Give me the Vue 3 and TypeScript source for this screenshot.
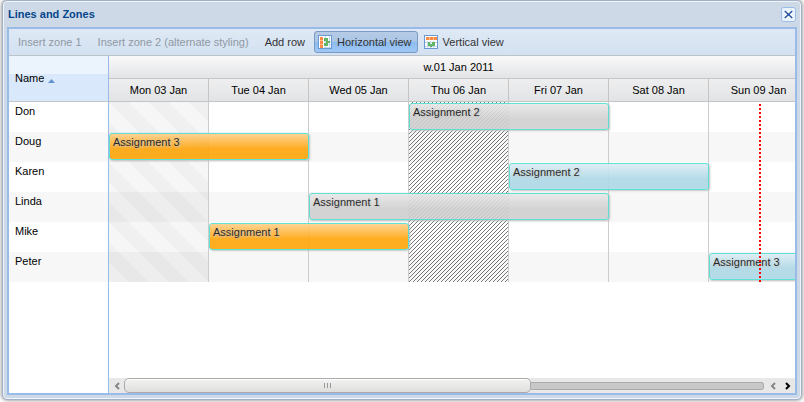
<script setup lang="ts">
import { ref } from 'vue'

interface Assignment {
  row: number
  start: number
  days: number
  name: string
  kind: 'orange' | 'grey' | 'blue'
}

const dayWidth = 100
const rowHeight = 30

const days: string[] = [
  'Mon 03 Jan',
  'Tue 04 Jan',
  'Wed 05 Jan',
  'Thu 06 Jan',
  'Fri 07 Jan',
  'Sat 08 Jan',
  'Sun 09 Jan',
]

const people: string[] = ['Don', 'Doug', 'Karen', 'Linda', 'Mike', 'Peter']

const assignments: Assignment[] = [
  { row: 0, start: 3, days: 2, name: 'Assignment 2', kind: 'grey' },
  { row: 1, start: 0, days: 2, name: 'Assignment 3', kind: 'orange' },
  { row: 2, start: 4, days: 2, name: 'Assignment 2', kind: 'blue' },
  { row: 3, start: 2, days: 3, name: 'Assignment 1', kind: 'grey' },
  { row: 4, start: 1, days: 2, name: 'Assignment 1', kind: 'orange' },
  { row: 5, start: 6, days: 2, name: 'Assignment 3', kind: 'blue' },
]

const orientation = ref<'horizontal' | 'vertical'>('horizontal')

const place = (a: Assignment) => ({
  left: `${a.start * dayWidth}px`,
  top: `${a.row * rowHeight + 1}px`,
  width: `${a.days * dayWidth}px`,
})
</script>

<template>
  <main class="window">
    <header class="title-bar">
      <h1>Lines and Zones</h1>
      <button class="close" type="button" aria-label="Close">
        <svg width="15" height="15" viewBox="0 0 15 15">
          <rect x="0.5" y="0.5" width="14" height="14" rx="2" fill="#e9f3fd" stroke="#99bbe8" />
          <path d="M4 4l7 7M11 4l-7 7" stroke="#fff" stroke-width="3.5" />
          <path d="M3.8 4l7.4 7M11.2 4l-7.4 7" stroke="#24509f" stroke-width="1.6" />
        </svg>
      </button>
    </header>

    <div class="body">
      <div class="toolbar" role="toolbar">
        <button type="button" disabled>Insert zone 1</button>
        <button type="button" disabled>Insert zone 2 (alternate styling)</button>
        <button type="button">Add row</button>
        <button
          type="button"
          class="with-icon"
          :class="{ pressed: orientation === 'horizontal' }"
          @click="orientation = 'horizontal'"
        >
          <svg width="14" height="14" viewBox="0 0 14 14" shape-rendering="crispEdges">
            <rect width="14" height="14" fill="#6a9ad4" />
            <rect x="1" y="1" width="12" height="12" fill="#fff" />
            <path d="M6 6h7v1H6zM6 9h7v1H6zM6 12h7v1H6zM7 1h1v12H7zM11 1h1v12h-1z" fill="#c4d8ee" />
            <path d="M2 2h3v11H2z" fill="#fb8a45" />
            <path d="M2 5h3v1H2zM2 9h3v1H2z" fill="#ffc08e" />
            <path d="M6 3h4v3H6zM8 6h4v2H8zM6 8h4v3H6z" fill="#62b562" />
          </svg>
          <span>Horizontal view</span>
        </button>
        <button
          type="button"
          class="with-icon"
          :class="{ pressed: orientation === 'vertical' }"
          @click="orientation = 'vertical'"
        >
          <svg width="14" height="14" viewBox="0 0 14 14" shape-rendering="crispEdges">
            <rect width="14" height="14" fill="#6a9ad4" />
            <rect x="1" y="1" width="12" height="12" fill="#fff" />
            <path d="M1 7h12v1H1zM1 11h12v1H1zM3 6h1v7H3zM6 6h1v7H6zM9 6h1v7H9z" fill="#c4d8ee" />
            <path d="M2 2h11v3H2z" fill="#fb8a45" />
            <path d="M5 2h1v3H5zM9 2h1v3H9z" fill="#ffc08e" />
            <path d="M4 7h2v4H4zM6 9h2v3H6zM8 7h3v4H8z" fill="#62b562" />
          </svg>
          <span>Vertical view</span>
        </button>
      </div>

      <div class="panes">
        <div class="names">
          <table>
            <thead>
              <tr>
                <th aria-sort="ascending">
                  <span class="sorted">
                    Name
                    <svg width="7" height="4" viewBox="0 0 7 4"><path d="M0 4L3.5 0 7 4z" fill="#6593cf" /></svg>
                  </span>
                </th>
              </tr>
            </thead>
            <tbody>
              <tr v-for="person in people" :key="person">
                <td>{{ person }}</td>
              </tr>
            </tbody>
          </table>
        </div>

        <div class="schedule">
          <div class="timeline">
            <table>
              <thead>
                <tr class="week">
                  <th :colspan="days.length">w.01 Jan 2011</th>
                </tr>
                <tr class="day">
                  <th v-for="day in days" :key="day">{{ day }}</th>
                </tr>
              </thead>
              <tbody>
                <tr v-for="person in people" :key="person">
                  <td v-for="day in days" :key="day"></td>
                </tr>
              </tbody>
            </table>

            <div class="overlay">
              <div class="zone striped"></div>
              <svg class="zone hatched" aria-hidden="true">
                <defs>
                  <pattern id="hatch" width="4" height="4" patternUnits="userSpaceOnUse">
                    <path
                      d="M3 0h1v1H3zM2 1h1v1H2zM1 2h1v1H1zM0 3h1v1H0z"
                      fill="#777"
                      shape-rendering="crispEdges"
                    />
                  </pattern>
                </defs>
                <rect width="100%" height="100%" fill="url(#hatch)" />
              </svg>
              <div
                v-for="(a, i) in assignments"
                :key="i"
                class="bar"
                :class="a.kind"
                :style="place(a)"
              >
                {{ a.name }}
              </div>
              <div class="now-line"></div>
            </div>
          </div>

          <div class="scrollbar">
            <button type="button" aria-label="Scroll left">
              <svg width="6" height="8" viewBox="0 0 6 8"><path d="M5 1L2 4l3 3" stroke="#888" /></svg>
            </button>
            <div class="track">
              <div class="thumb"><i></i><i></i><i></i></div>
            </div>
            <button type="button" aria-label="Scroll left">
              <svg width="6" height="8" viewBox="0 0 6 8"><path d="M5 1L2 4l3 3" stroke="#888" /></svg>
            </button>
            <button type="button" aria-label="Scroll right">
              <svg width="6" height="8" viewBox="0 0 6 8"><path d="M1 1l3 3-3 3" stroke="#000" /></svg>
            </button>
          </div>
        </div>
      </div>
    </div>
  </main>
</template>

<style>
body {
  margin: 0;
  background: #fff;
}

#app {
  display: flex;
  height: 100vh;
  box-sizing: border-box;
  padding: 0 2px 2px;
}
</style>

<style scoped>
* {
  box-sizing: border-box;
}

.window {
  flex: 1;
  min-width: 0;
  display: flex;
  flex-direction: column;
  padding: 0 4px 4px;
  border: 1px solid #a2b1c5;
  border-radius: 5px;
  background: #ced9e7;
  box-shadow: inset 0 0 0 1px #f0f5fb, 0 0 4px #777;
  font: 11px/13px "Liberation Sans", Arial, sans-serif;
  color: #222;
}

.title-bar {
  display: flex;
  align-items: center;
  justify-content: space-between;
  height: 26px;
  padding: 0 1px;
}

h1 {
  margin: 0;
  font-size: 11px;
  line-height: 13px;
  color: #04468c;
}

button {
  margin: 0;
  padding: 0;
  border: 0;
  background: none;
  font: inherit;
  color: inherit;
}

button svg {
  display: block;
  fill: none;
}

.body {
  flex: 1;
  min-height: 0;
  display: flex;
  flex-direction: column;
  border: 2px solid #99bbe8;
  background: #fff;
}

.toolbar {
  display: flex;
  align-items: center;
  gap: 2px;
  height: 27px;
  padding: 0 2px;
  border-bottom: 1px solid #bdc3ca;
  background: linear-gradient(#dfe9f5, #d3e1f1);
}

.toolbar button {
  height: 22px;
  padding: 0 7px;
  white-space: nowrap;
  color: #333;
}

.toolbar button:disabled {
  color: #8f99a3;
}

.toolbar .with-icon {
  display: flex;
  align-items: center;
  gap: 5px;
  padding: 0 6px 0 4px;
  border-radius: 3px;
}

.toolbar .with-icon.pressed {
  padding: 0 5px 0 3px;
  border: 1px solid #7a9ac4;
  background: linear-gradient(#b6cbe4, #aac6e8 48%, #8dbcef 52%, #9fc8f5);
}

.panes {
  flex: 1;
  min-height: 0;
  display: flex;
}

.names {
  width: 100px;
  border-right: 1px solid #99bbe8;
}

table {
  width: 100%;
  border-collapse: separate;
  border-spacing: 0;
  table-layout: fixed;
}

th,
td {
  padding: 0;
  font-weight: normal;
}

.names th {
  height: 46px;
  padding: 0 6px;
  text-align: left;
  border-bottom: 1px solid #c5c5c5;
  background: linear-gradient(#ebf3fd, #ebf3fd 39%, #d9e8fb 39%);
  color: #000;
}

.sorted {
  display: flex;
  align-items: center;
  gap: 4px;
}

.sorted svg {
  margin-top: 4px;
}

tbody tr {
  height: 30px;
}

tbody tr:nth-child(even) {
  background: #f7f7f7;
}

.names td {
  padding: 3px 6px;
  vertical-align: top;
  color: #000;
}

.schedule {
  flex: 1;
  min-width: 0;
  display: flex;
  flex-direction: column;
  justify-content: space-between;
}

.timeline {
  position: relative;
  overflow: hidden;
}

.timeline table {
  width: 700px;
}

.timeline th {
  height: 23px;
  border-right: 1px solid #c5c5c5;
  border-bottom: 1px solid #c5c5c5;
  color: #000;
}

.week th {
  background: linear-gradient(#f9f9f9, #e3e4e6);
}

.day th {
  background: linear-gradient(#eeeeef, #e2e3e5);
}

.timeline td {
  border-right: 1px solid #ccc;
}

.overlay {
  position: absolute;
  left: 0;
  top: 46px;
  width: 700px;
  height: 180px;
}

.zone {
  position: absolute;
  top: 0;
  width: 99px;
  height: 100%;
}

.striped {
  left: 0;
  background: linear-gradient(
    45deg,
    rgba(0, 0, 0, 0.06) 25%,
    rgba(0, 0, 0, 0.035) 25%,
    rgba(0, 0, 0, 0.035) 50%,
    rgba(0, 0, 0, 0.06) 50%,
    rgba(0, 0, 0, 0.06) 75%,
    rgba(0, 0, 0, 0.035) 75%
  );
  background-size: 40px 40px;
}

.hatched {
  left: 300px;
}

.bar {
  position: absolute;
  height: 27px;
  padding: 2px 3px;
  border: 1px solid #4de0d2;
  border-radius: 3px;
  box-shadow: 1px 1px 2px #bbb;
  opacity: 0.9;
  text-shadow: 1px 1px 2px #bbb;
  color: #111;
}

.orange {
  background: linear-gradient(#ffd08a, #ffa50a 60%);
}

.grey {
  background: linear-gradient(#e8e8e8, #d0d0d0 60%);
}

.blue {
  background: linear-gradient(#dcedf4, #add8e6 60%);
}

.now-line {
  position: absolute;
  left: 650px;
  top: 2px;
  height: 178px;
  width: 2px;
  background: repeating-linear-gradient(#f00 0 2px, transparent 2px 4px);
}

.scrollbar {
  display: flex;
  align-items: center;
  height: 15px;
  background: #e8e8e8;
}

.scrollbar button {
  display: flex;
  align-items: center;
  justify-content: center;
  width: 15px;
  height: 15px;
}

.scrollbar path {
  stroke-width: 2;
}

.track {
  flex: 1;
  height: 15px;
  padding-right: 1px;
  display: flex;
  align-items: center;
}

.track::after {
  content: "";
  flex: 4;
  height: 6px;
  border: 1px solid #aaa;
  border-left: 0;
  border-radius: 0 3px 3px 0;
  background: #c8c8c8;
}

.thumb {
  flex: 7;
  height: 15px;
  display: flex;
  align-items: center;
  justify-content: center;
  gap: 2px;
  border: 1px solid #aaa;
  border-radius: 5px;
  background: linear-gradient(#f2f2f0, #dfdfdd);
  box-shadow: inset 0 1px #fff;
}

.thumb i {
  width: 1px;
  height: 5px;
  background: #999;
}
</style>
